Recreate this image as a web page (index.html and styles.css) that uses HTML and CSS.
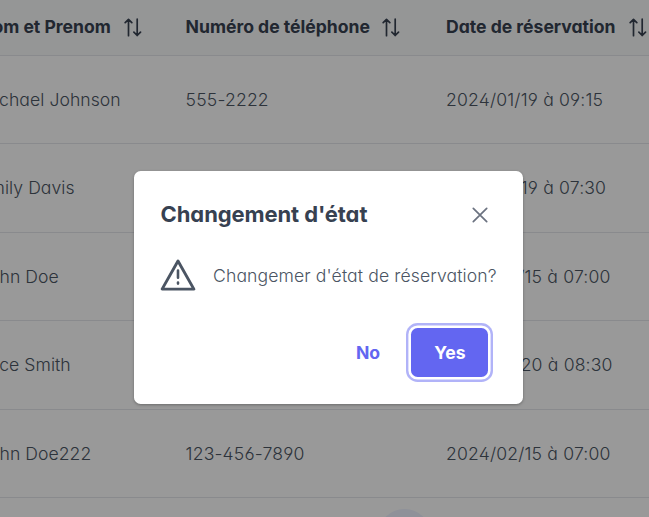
FILE: index.html
```
<!DOCTYPE html>
<html lang="fr">
<head>
<meta charset="utf-8">
<title>Réservations</title>
<link rel="stylesheet" href="styles.css">
</head>
<body>
<svg class="defs" aria-hidden="true">
  <symbol id="sort" viewBox="0 0 18 19"><path d="M4.5 17.7V1.4M1.2 4.7 4.5 1.4 7.8 4.7M13.2 1.2v16.3M9.9 14.2l3.3 3.3 3.3-3.3"/></symbol>
</svg>
<main class="table">
  <div class="row head">
    <span class="cell"><span class="w1">Nom et Prenom</span><svg class="sort"><use href="#sort"/></svg></span>
    <span class="cell"><span class="w2">Numéro de téléphone</span><svg class="sort"><use href="#sort"/></svg></span>
    <span class="cell"><span class="w3">Date de réservation</span><svg class="sort"><use href="#sort"/></svg></span>
  </div>
  <div class="row"><span class="cell">Michael Johnson</span><span class="cell">555-2222</span><span class="cell">2024/01/19 à 09:15</span></div>
  <div class="row"><span class="cell">Emily Davis</span><span class="cell"></span><span class="cell">2024/01/19 à 07:30</span></div>
  <div class="row"><span class="cell">John Doe</span><span class="cell"></span><span class="cell">2024/02/15 à 07:00</span></div>
  <div class="row"><span class="cell">Alice Smith</span><span class="cell"></span><span class="cell">2024/01/20 à 08:30</span></div>
  <div class="row"><span class="cell">John Doe222</span><span class="cell">123-456-7890</span><span class="cell">2024/02/15 à 07:00</span></div>
  <div class="pager"><span class="page"></span></div>
</main>
<div class="mask">
  <section class="dialog" role="dialog">
    <header class="dialog-head">
      <h1>Changement d'état</h1>
      <svg class="close" viewBox="0 0 16 16"><path d="M1.3 1.3 14.7 14.7M14.7 1.3 1.3 14.7"/></svg>
    </header>
    <div class="dialog-body">
      <svg class="warn" viewBox="0 0 36 32"><path d="M18 2 33.9 30.1H2.1Z"/><path class="mark" d="M18 11.6v7.2M18 23.6v1"/></svg>
      <p>Changemer d'état de réservation?</p>
    </div>
    <footer class="dialog-foot">
      <button class="btn no">No</button>
      <button class="btn yes">Yes</button>
    </footer>
  </section>
</div>
</body>
</html>
```
FILE: styles.css
```
* { box-sizing: border-box; }
body {
  margin: 0;
  width: 649px;
  height: 517px;
  overflow: hidden;
  background: #fff;
  color: #4b5563;
  font: 360 17.6px/24px Inter, "Liberation Sans", sans-serif;
  font-feature-settings: "cv02", "cv03", "cv04", "cv11";
}
.defs { position: absolute; width: 0; height: 0; }
.table { width: 720px; margin-left: -21px; }
.row {
  display: grid;
  grid-template-columns: 206.6px 260.4px 253px;
  align-items: center;
  height: 88.4px;
  border-bottom: 1px solid #e5e7eb;
}
.row:not(.head) .cell { padding-top: 0.6px; letter-spacing: 0.05px; }
.row:not(.head) .cell + .cell { letter-spacing: 0.17px; }
.head {
  height: 56px;
  background: #f9fafb;
  color: #374151;
  font-weight: 700;
}
.cell { display: flex; align-items: center; white-space: nowrap; }
.head .cell { padding-bottom: 2px; letter-spacing: -0.01px; }
.w1 { width: 145px; }
.w2 { width: 196.4px; }
.w3 { width: 183px; }
.sort {
  width: 18px;
  height: 19px;
  margin-top: 2px;
  fill: none;
  stroke: #374151;
  stroke-width: 1.7;
  stroke-linecap: round;
  stroke-linejoin: round;
}
.pager { display: flex; padding: 11px 0 0 399px; }
.page { width: 52.8px; height: 52.8px; flex: none; border-radius: 50%; background: #eef2ff; }
.mask { position: absolute; inset: 0; background: rgba(0, 0, 0, .4); padding: 171px 126px 113px 134px; }
.dialog {
  height: 233px;
  border-radius: 6.6px;
  background: #fff;
  padding: 26px 26px 0;
  box-shadow: 0 1px 3px rgba(0, 0, 0, .3);
}
.dialog-head { display: flex; align-items: center; justify-content: space-between; height: 35px; padding: 0 9px 0 0.6px; }
h1 { margin: -2px 0 0; color: #374151; font-size: 22px; line-height: 30px; font-weight: 700; letter-spacing: -0.1px; }
.close { width: 16px; height: 16px; fill: none; stroke: #6b7280; stroke-width: 1.7; stroke-linecap: round; }
.dialog-body { display: flex; align-items: center; height: 36px; margin-top: 26px; }
.warn { width: 36px; height: 32px; margin-top: -2px; fill: none; stroke: #4b5563; stroke-width: 2.9; stroke-linejoin: round; }
.mark { stroke-linecap: round; stroke-width: 2.6; }
.dialog-body p { margin: 0 0 0 17px; white-space: nowrap; letter-spacing: 0.11px; }
.dialog-foot { display: flex; justify-content: flex-end; margin-top: 34px; padding-right: 9px; gap: 9px; }
.btn {
  height: 49px;
  border: 0;
  border-radius: 6.6px;
  padding: 0;
  font: inherit;
  font-weight: 700;
}
.no { width: 68px; background: #fff; color: #6366f1; }
.yes { width: 77px; padding-left: 1px; background: #6366f1; color: #fff; box-shadow: 0 0 0 2.6px #fff, 0 0 0 5px #b1b3f8; }
```
